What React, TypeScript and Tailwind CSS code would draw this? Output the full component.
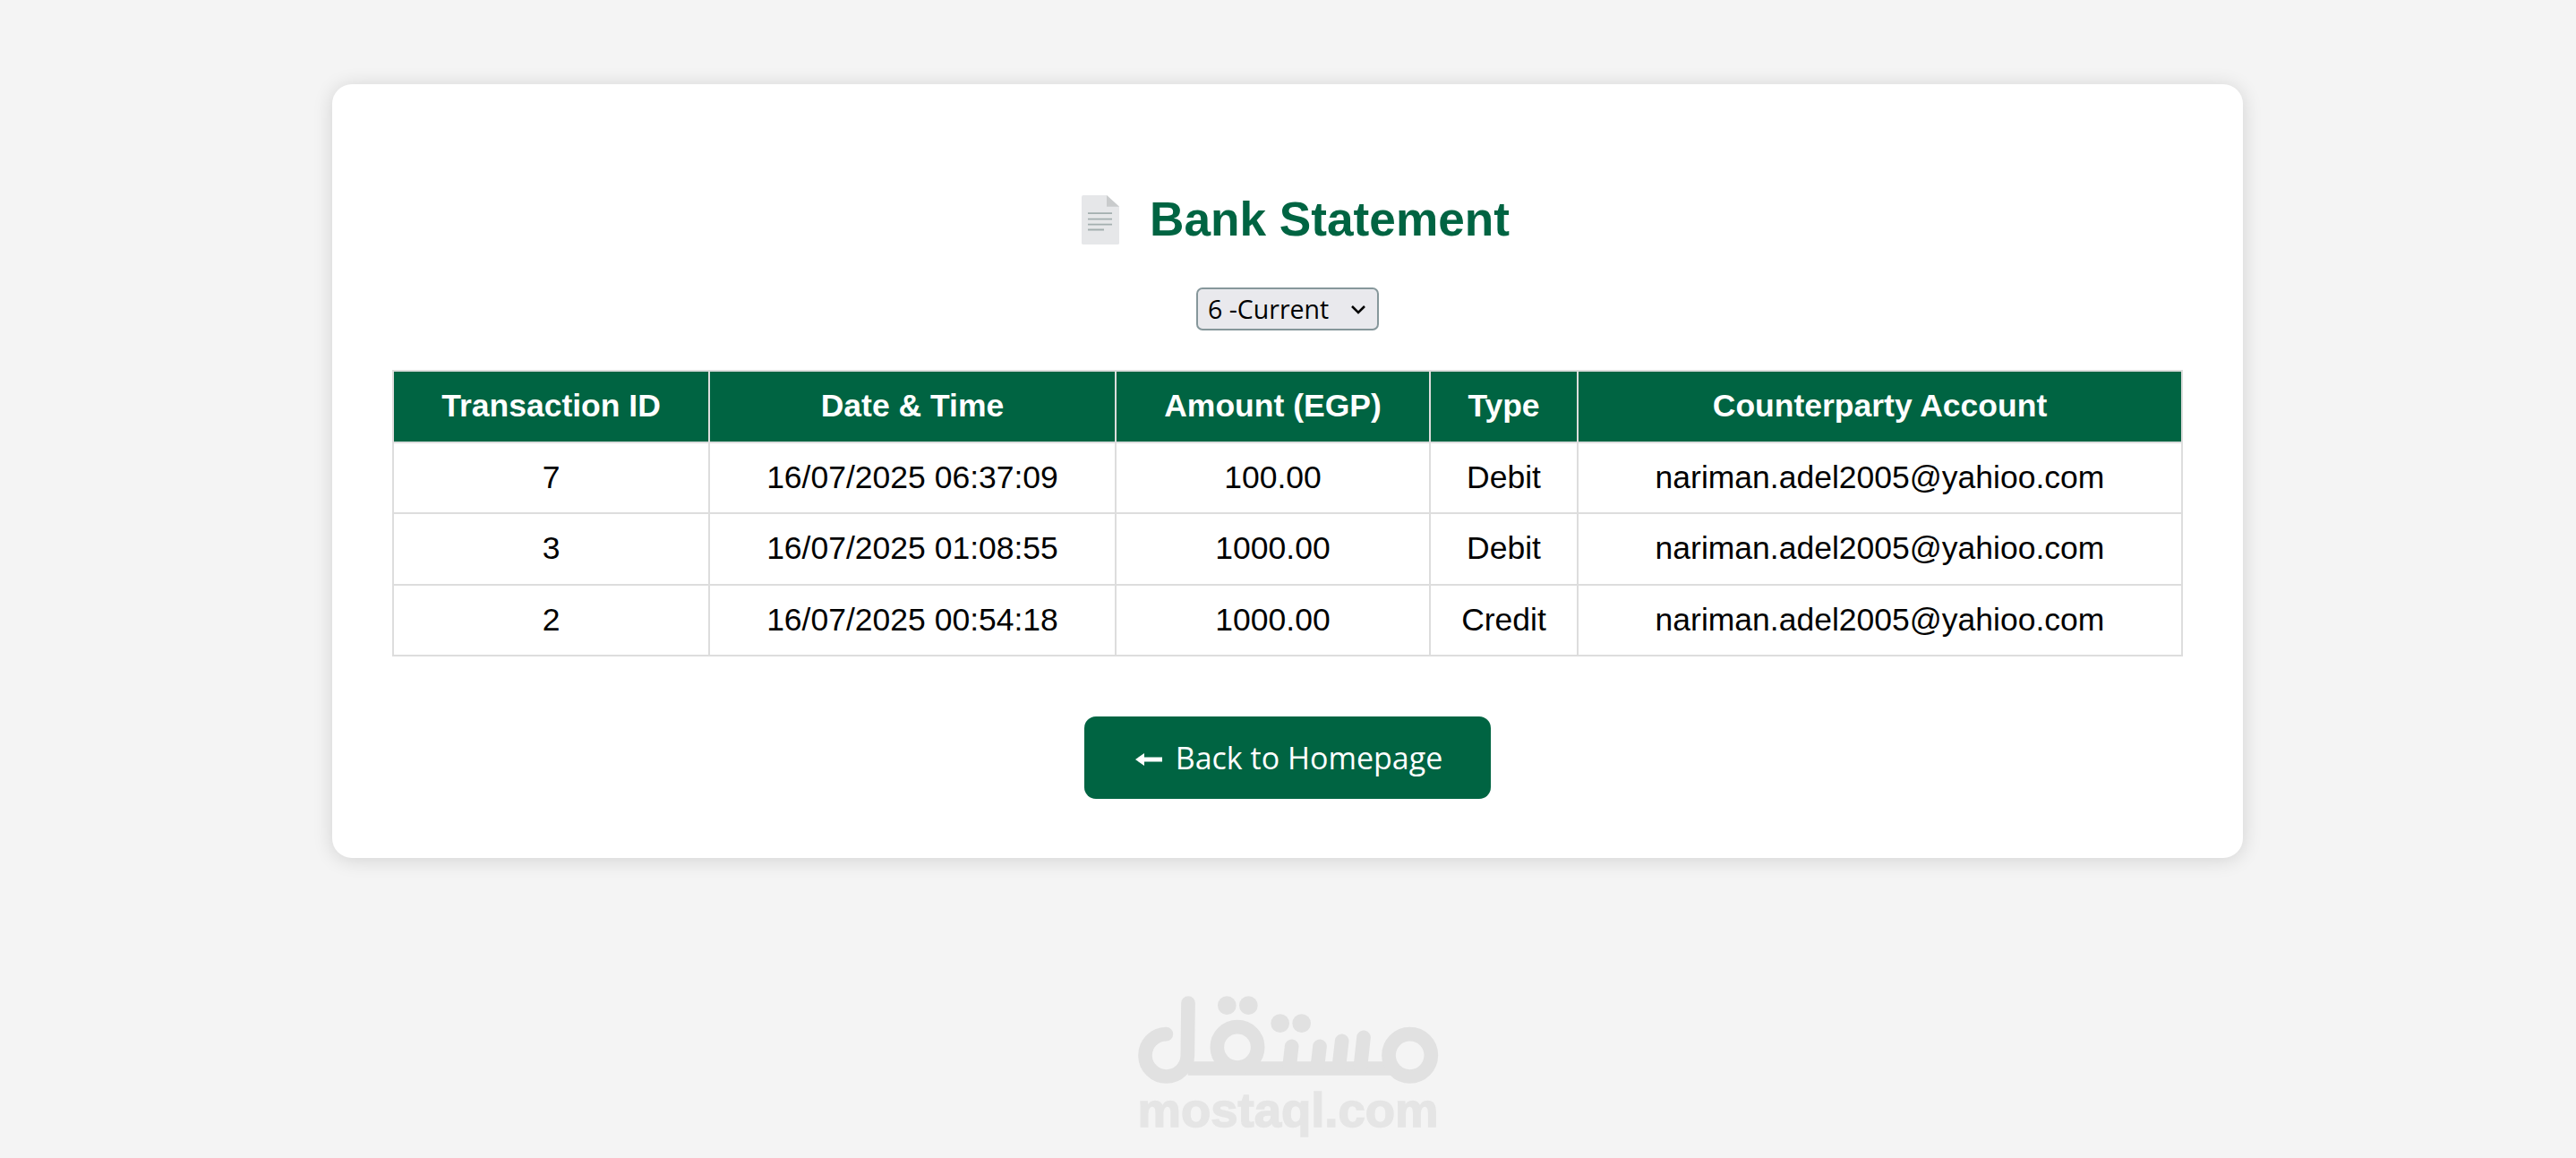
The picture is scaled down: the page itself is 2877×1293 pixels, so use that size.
const GREEN = 'bg-[#006442]';

const rows = [
  { id: '7', date: '16/07/2025 06:37:09', amount: '100.00', type: 'Debit' },
  { id: '3', date: '16/07/2025 01:08:55', amount: '1000.00', type: 'Debit' },
  { id: '2', date: '16/07/2025 00:54:18', amount: '1000.00', type: 'Credit' },
];

const headers = ['Transaction ID', 'Date & Time', 'Amount (EGP)', 'Type', 'Counterparty Account'];

function DocIcon() {
  return (
    <svg width="42" height="55" viewBox="0 0 42 60" preserveAspectRatio="none" className="shrink-0">
      <path d="M2 0H28L42 14V58a2 2 0 0 1-2 2H2a2 2 0 0 1-2-2V2a2 2 0 0 1 2-2Z" fill="#e6e7e9" />
      <path d="M28 0L42 14H28Z" fill="#c9cbcc" />
      <path d="M7 22H34M7 29H34M7 35.500H34M7 42H25" stroke="#a3afaf" strokeWidth="2" />
    </svg>
  );
}

function Watermark() {
  return (
    <div className="absolute left-[1220px] top-[1090px] w-[420px]">
      <svg width="420" height="124" viewBox="0 0 1260 372" fill="none" stroke="#e1e1e1" strokeWidth="47" strokeLinecap="round">
        <path d="M247 194A71 71 0 1 0 319 265L321 90" />
        <path d="M320 309H1000" strokeLinecap="butt" />
        <circle cx="486" cy="238" r="68" />
        <circle cx="1064" cy="265" r="71" />
        <path d="M668 235L660 305M762 235L754 305M836 217L826 305M909 205L898 305" />
        <g fill="#e1e1e1" stroke="none">
          <circle cx="451" cy="98" r="31" />
          <circle cx="523" cy="98" r="31" />
          <circle cx="629" cy="158" r="31" />
          <circle cx="701" cy="158" r="31" />
        </g>
      </svg>
      <div className="ml-[50px] mt-[-4px] w-[337px] whitespace-nowrap text-center font-['Liberation_Sans',sans-serif] text-[54.500px] leading-[60px] font-bold text-[#e5e5e5] [-webkit-text-stroke:1.500px_#e5e5e5]">
        mostaql.com
      </div>
    </div>
  );
}

export default function App() {
  return (
    <div className="relative h-[1293px] overflow-hidden bg-[#f4f4f4] pt-[94px] font-['Liberation_Sans',sans-serif] text-black">
      <div className="ml-[371px] flex h-[864px] w-[2134px] flex-col items-center rounded-[22px] bg-white px-[67px] pt-[121px] shadow-[0_2px_22px_rgba(0,0,0,0.14)]">
        <h2 className="flex h-[60px] items-center gap-[34px] pl-[18px] text-[53.200px] font-bold text-[#006442]">
          <DocIcon />
          Bank Statement
        </h2>

        <div className="relative mt-[46px] h-[48px]">
          <select className="h-[48px] w-[204px] appearance-none rounded-[7px] border-2 border-[#86979b] bg-[#e9e9ed] pl-[11px] font-['Open_Sans',sans-serif] text-[28.500px] text-black">
            <option>6 -Current</option>
          </select>
          <svg width="18" height="12" viewBox="0 0 18 12" fill="none" stroke="black" strokeWidth="2.500" className="pointer-events-none absolute right-[14px] top-[19px]">
            <path d="M2 2L9 9L16 2" />
          </svg>
        </div>

        <table className="mt-[44px] w-[1998px] table-fixed border-collapse text-center text-[35.500px]">
          <colgroup>
            <col className="w-[353px]" />
            <col className="w-[454px]" />
            <col className="w-[351px]" />
            <col className="w-[165px]" />
            <col className="w-[675px]" />
          </colgroup>
          <thead>
            <tr className="h-[80px]">
              {headers.map((h) => (
                <th key={h} className={`border-2 border-[#dddddd] ${GREEN} font-bold text-white`}>
                  {h}
                </th>
              ))}
            </tr>
          </thead>
          <tbody>
            {rows.map((r) => (
              <tr key={r.id} className="h-[79.300px]">
                <td className="border-2 border-[#dddddd]">{r.id}</td>
                <td className="border-2 border-[#dddddd]">{r.date}</td>
                <td className="border-2 border-[#dddddd]">{r.amount}</td>
                <td className="border-2 border-[#dddddd]">{r.type}</td>
                <td className="border-2 border-[#dddddd]">nariman.adel2005@yahioo.com</td>
              </tr>
            ))}
          </tbody>
        </table>

        <a className={`mt-[67px] flex h-[92px] w-[454px] items-center justify-center gap-[15px] rounded-[13px] pt-[2px] pl-[3px] ${GREEN} font-['Open_Sans',sans-serif] text-[34px] text-white`}>
          <svg width="30" height="16" viewBox="0 0 30 16" fill="white" className="mt-[2px] shrink-0">
            <path d="M0 8L10 1V5.500H30V10.500H10V15Z" />
          </svg>
          Back to Homepage
        </a>
      </div>

      <Watermark />
    </div>
  );
}
